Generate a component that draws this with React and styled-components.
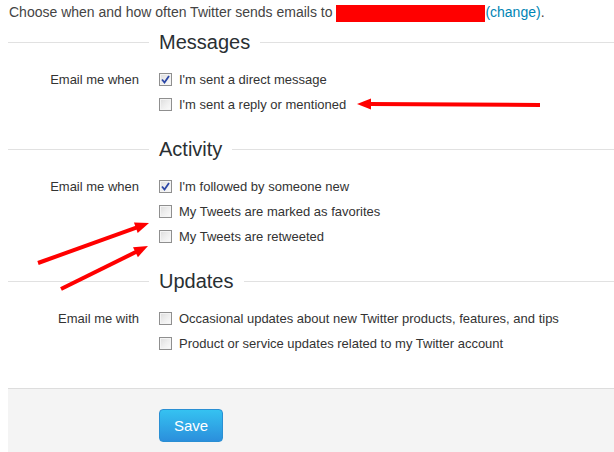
import React from "react";
import styled, { createGlobalStyle } from "styled-components";

const GlobalStyle = createGlobalStyle`
  html, body {
    margin: 0;
    padding: 0;
    background: #fff;
  }
  body {
    font-family: "Liberation Sans", Arial, sans-serif;
    font-size: 13px;
    color: #333;
  }
`;

const Page = styled.div`
  position: relative;
  width: 614px;
  height: 452px;
  overflow: hidden;
  padding-top: 3px;
  box-sizing: border-box;
`;

const Intro = styled.p`
  margin: 0 0 6px 9px;
  height: 18px;
  font-size: 14px;
  line-height: 18px;
  color: #444;
  white-space: nowrap;
`;

const Redacted = styled.span`
  display: inline-block;
  width: 149px;
  height: 17px;
  background: #ff0000;
  vertical-align: -5px;
`;

const Link = styled.a`
  color: #0084b4;
  text-decoration: none;
`;

const Section = styled.section`
  padding: 0 0 17px 8px;
`;

const Legend = styled.div`
  display: flex;
  align-items: center;
  height: 30px;
  margin-bottom: 10px;
`;

const Rule = styled.div`
  height: 1px;
  background: #e1e1e1;
  flex: ${(p) => (p.$grow ? "1" : "none")};
  width: ${(p) => (p.$grow ? "auto" : "141px")};
`;

const Heading = styled.h2`
  margin: 0;
  padding: 0 10px;
  font-size: 20px;
  font-weight: normal;
  color: #292f33;
  line-height: 30px;
`;

const Grid = styled.div`
  display: grid;
  grid-template-columns: 131px 1fr;
  column-gap: 20px;
`;

const Label = styled.div`
  text-align: right;
  line-height: 25px;
`;

const Options = styled.div`
  display: flex;
  flex-direction: column;
`;

const Option = styled.label`
  display: flex;
  align-items: center;
  gap: 7px;
  height: 25px;
  white-space: nowrap;
`;

const Box = styled.span`
  width: 11px;
  height: 11px;
  border: 1px solid #8f8f8f;
  background: linear-gradient(135deg, #dcdcdc 0%, #eeeeee 50%, #fbfbfb 100%);
  box-shadow: inset 0 0 0 1px #f4f4f4;
  display: flex;
  align-items: center;
  justify-content: center;
`;

const Footer = styled.div`
  margin: 15px 0 0 8px;
  border-top: 1px solid #dddddd;
  background: #f4f4f4;
  padding: 20px 0 40px 151px;
`;

const SaveButton = styled.button`
  width: 64px;
  height: 33px;
  border: 1px solid #2a8fd3;
  border-radius: 4px;
  background: linear-gradient(#35c2f1, #2b8fdc);
  color: #fff;
  font-family: "Liberation Sans", Arial, sans-serif;
  font-size: 15px;
  padding: 0;
`;

const Overlay = styled.svg`
  position: absolute;
  left: 0;
  top: 0;
  pointer-events: none;
`;

const Checkbox = ({ checked }) => (
  <Box>
    {checked && (
      <svg width="9" height="9" viewBox="0 0 9 9">
        <path d="M1 4.5 L3.5 7.5 L8 1" fill="none" stroke="#2b46a6" strokeWidth="1.8" />
      </svg>
    )}
  </Box>
);

const sections = [
  {
    title: "Messages",
    label: "Email me when",
    options: [
      { text: "I'm sent a direct message", checked: true },
      { text: "I'm sent a reply or mentioned", checked: false },
    ],
  },
  {
    title: "Activity",
    label: "Email me when",
    options: [
      { text: "I'm followed by someone new", checked: true },
      { text: "My Tweets are marked as favorites", checked: false },
      { text: "My Tweets are retweeted", checked: false },
    ],
  },
  {
    title: "Updates",
    label: "Email me with",
    options: [
      { text: "Occasional updates about new Twitter products, features, and tips", checked: false },
      { text: "Product or service updates related to my Twitter account", checked: false },
    ],
  },
];

const arrows = [
  { from: [540, 105], to: [357, 104] },
  { from: [38, 263], to: [149, 223] },
  { from: [61, 289], to: [148, 246] },
];

const Arrow = ({ from, to }) => {
  const [x1, y1] = from;
  const [x2, y2] = to;
  const len = Math.hypot(x2 - x1, y2 - y1);
  const ux = (x2 - x1) / len;
  const uy = (y2 - y1) / len;
  const head = 14;
  const half = 5.5;
  const bx = x2 - ux * head;
  const by = y2 - uy * head;
  const pts = [
    [x2, y2],
    [bx - uy * half, by + ux * half],
    [bx + uy * half, by - ux * half],
  ];
  return (
    <g>
      <line x1={x1} y1={y1} x2={bx + ux * 2} y2={by + uy * 2} stroke="#ff0000" strokeWidth="4" />
      <polygon points={pts.map((p) => p.join(",")).join(" ")} fill="#ff0000" />
    </g>
  );
};

const App = () => (
  <Page>
    <GlobalStyle />
    <Intro>
      Choose when and how often Twitter sends emails to <Redacted />
      <Link href="#">(change)</Link>.
    </Intro>
    {sections.map((s) => (
      <Section key={s.title}>
        <Legend>
          <Rule />
          <Heading>{s.title}</Heading>
          <Rule $grow />
        </Legend>
        <Grid>
          <Label>{s.label}</Label>
          <Options>
            {s.options.map((o) => (
              <Option key={o.text}>
                <Checkbox checked={o.checked} />
                {o.text}
              </Option>
            ))}
          </Options>
        </Grid>
      </Section>
    ))}
    <Footer>
      <SaveButton>Save</SaveButton>
    </Footer>
    <Overlay width="614" height="452">
      {arrows.map((a, i) => (
        <Arrow key={i} {...a} />
      ))}
    </Overlay>
  </Page>
);

export default App;
